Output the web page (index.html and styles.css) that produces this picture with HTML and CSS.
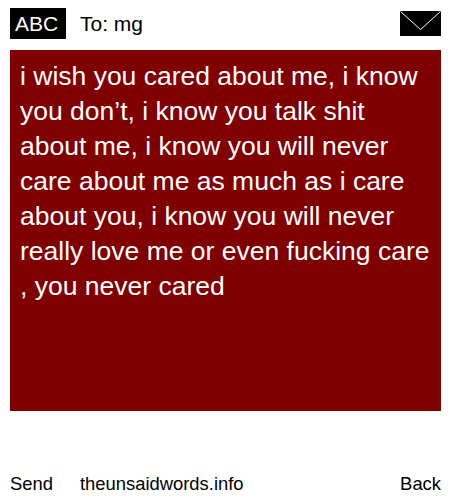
FILE: index.html
```html
<!DOCTYPE html>
<html lang="en">
<head>
    <meta charset="UTF-8">
    <title>The Unsaid Words</title>
    <link rel="stylesheet" href="styles.css">
</head>
<body>
    <div class="pagina">
        <header class="topo">
            <span class="abc">ABC</span>
            <span class="para">To: mg</span>
            <svg class="envelope" width="41" height="25" viewBox="0 0 41 25">
                <rect width="41" height="25" fill="#000000"/>
                <path d="M0.5 0.5 L20.5 18.5 L40.5 0.5" fill="none" stroke="#ffffff" stroke-width="1"/>
            </svg>
        </header>
        <main class="mensagem">i wish you cared about me, i know you don’t, i know you talk shit about me, i know you will never care about me as much as i care about you, i know you will never really love me or even fucking care , you never cared</main>
        <footer class="rodape">
            <a class="enviar" href="#">Send</a>
            <a class="site" href="#">theunsaidwords.info</a>
            <a class="voltar" href="#">Back</a>
        </footer>
    </div>
</body>
</html>
```

FILE: styles.css
```css
body {
    margin: 0;
    background-color: #ffffff;
    font-family: "Liberation Sans", Arial, sans-serif;
    color: #000000;
}

.pagina {
    width: 450px;
    height: 500px;
    box-sizing: border-box;
    padding: 8px 9px 0 10px;
    display: flex;
    flex-direction: column;
}

.topo {
    height: 31px;
    display: flex;
    align-items: center;
    font-size: 21px;
}

.abc {
    width: 51px;
    height: 31px;
    padding-left: 5px;
    line-height: 31px;
    background-color: #000000;
    color: #ffffff;
}

.para {
    margin-left: 14px;
}

.envelope {
    margin-left: auto;
}

.mensagem {
    margin-top: 11px;
    height: 361px;
    box-sizing: border-box;
    padding: 9px 10px 0;
    background-color: #800000;
    color: #ffffff;
    font-size: 26.5px;
    line-height: 35px;
}

.rodape {
    margin-top: 61px;
    display: flex;
    font-size: 18.4px;
    line-height: 24px;
}

.rodape a {
    color: #000000;
    text-decoration: none;
}

.site {
    margin-left: 27px;
}

.voltar {
    margin-left: auto;
}
```
